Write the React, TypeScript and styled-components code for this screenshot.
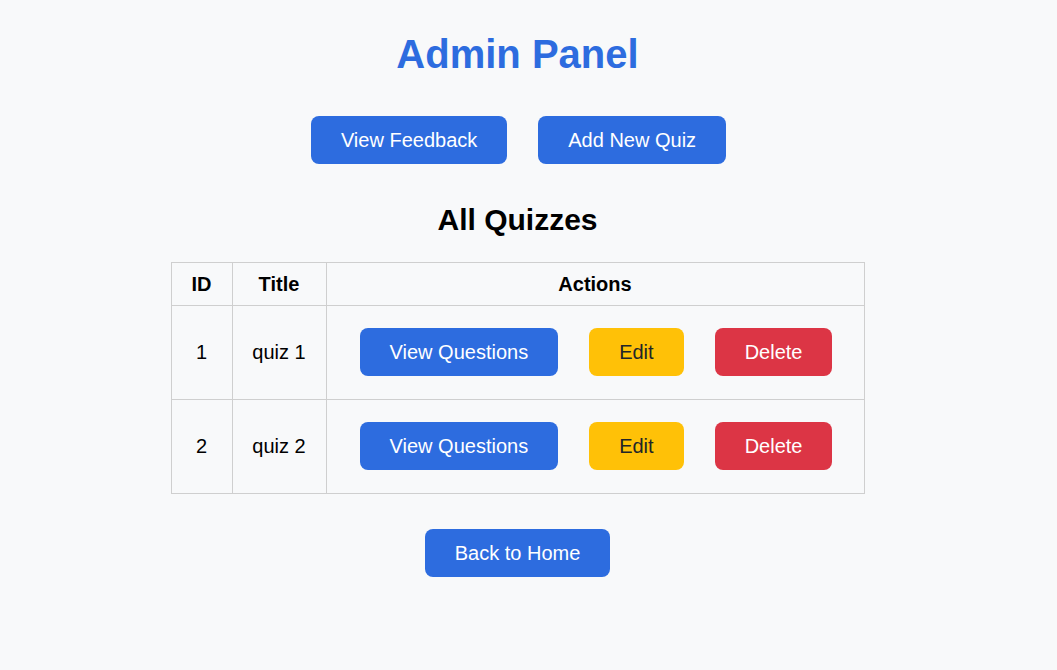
import React from "react";
import styled, { createGlobalStyle, css } from "styled-components";

const GlobalStyle = createGlobalStyle`
  html, body {
    margin: 0;
    padding: 0;
    background: #f8f9fa;
    font-family: "Liberation Sans", Arial, sans-serif;
    color: #000;
  }
`;

const Page = styled.div`
  display: flex;
  flex-direction: column;
  align-items: center;
  padding: 31px 22px 0 0;
  min-height: 100vh;
  box-sizing: border-box;
`;

const Title = styled.h1`
  margin: 0 0 39px;
  font-size: 40px;
  line-height: 46px;
  font-weight: 700;
  color: #2d6cdf;
`;

const ButtonRow = styled.div`
  display: flex;
  gap: 31px;
  margin-bottom: 38px;
  padding-left: 2px;
`;

type Variant = "primary" | "warning" | "danger";

const Button = styled.button<{ $variant?: Variant }>`
  border: none;
  border-radius: 8px;
  padding: 12px 30px;
  font-family: "Liberation Sans", Arial, sans-serif;
  font-size: 20px;
  line-height: 24px;
  cursor: pointer;
  white-space: nowrap;
  ${({ $variant = "primary" }) =>
    $variant === "warning"
      ? css`
          background: #ffc107;
          color: #212529;
        `
      : $variant === "danger"
      ? css`
          background: #dc3545;
          color: #fff;
        `
      : css`
          background: #2d6cdf;
          color: #fff;
        `}
`;

const Subtitle = styled.h2`
  margin: 0 0 25px;
  font-size: 30px;
  line-height: 35px;
  font-weight: 700;
`;

const Table = styled.table`
  border-collapse: collapse;
  table-layout: fixed;
  width: 694px;
  margin-bottom: 35px;
`;

const Th = styled.th<{ $w?: number }>`
  border: 1px solid #cfcfcf;
  padding: 10px 0 9px;
  font-size: 20px;
  line-height: 23px;
  font-weight: 700;
  text-align: center;
  ${({ $w }) => ($w ? `width: ${$w}px;` : "")}
`;

const Td = styled.td`
  border: 1px solid #cfcfcf;
  padding: 0;
  height: 93px;
  font-size: 20px;
  line-height: 23px;
  text-align: center;
  vertical-align: middle;
  white-space: nowrap;
`;

const Actions = styled.div`
  display: flex;
  justify-content: center;
  gap: 31px;
  padding: 0 0 1px 2px;
`;

const quizzes = [
  { id: 1, title: "quiz 1" },
  { id: 2, title: "quiz 2" },
];

export default function App() {
  return (
    <>
      <GlobalStyle />
      <Page>
        <Title>Admin Panel</Title>
        <ButtonRow>
          <Button>View Feedback</Button>
          <Button>Add New Quiz</Button>
        </ButtonRow>
        <Subtitle>All Quizzes</Subtitle>
        <Table>
          <thead>
            <tr>
              <Th $w={60}>ID</Th>
              <Th $w={93}>Title</Th>
              <Th>Actions</Th>
            </tr>
          </thead>
          <tbody>
            {quizzes.map((q) => (
              <tr key={q.id}>
                <Td>{q.id}</Td>
                <Td>{q.title}</Td>
                <Td>
                  <Actions>
                    <Button>View Questions</Button>
                    <Button $variant="warning">Edit</Button>
                    <Button $variant="danger">Delete</Button>
                  </Actions>
                </Td>
              </tr>
            ))}
          </tbody>
        </Table>
        <Button>Back to Home</Button>
      </Page>
    </>
  );
}
